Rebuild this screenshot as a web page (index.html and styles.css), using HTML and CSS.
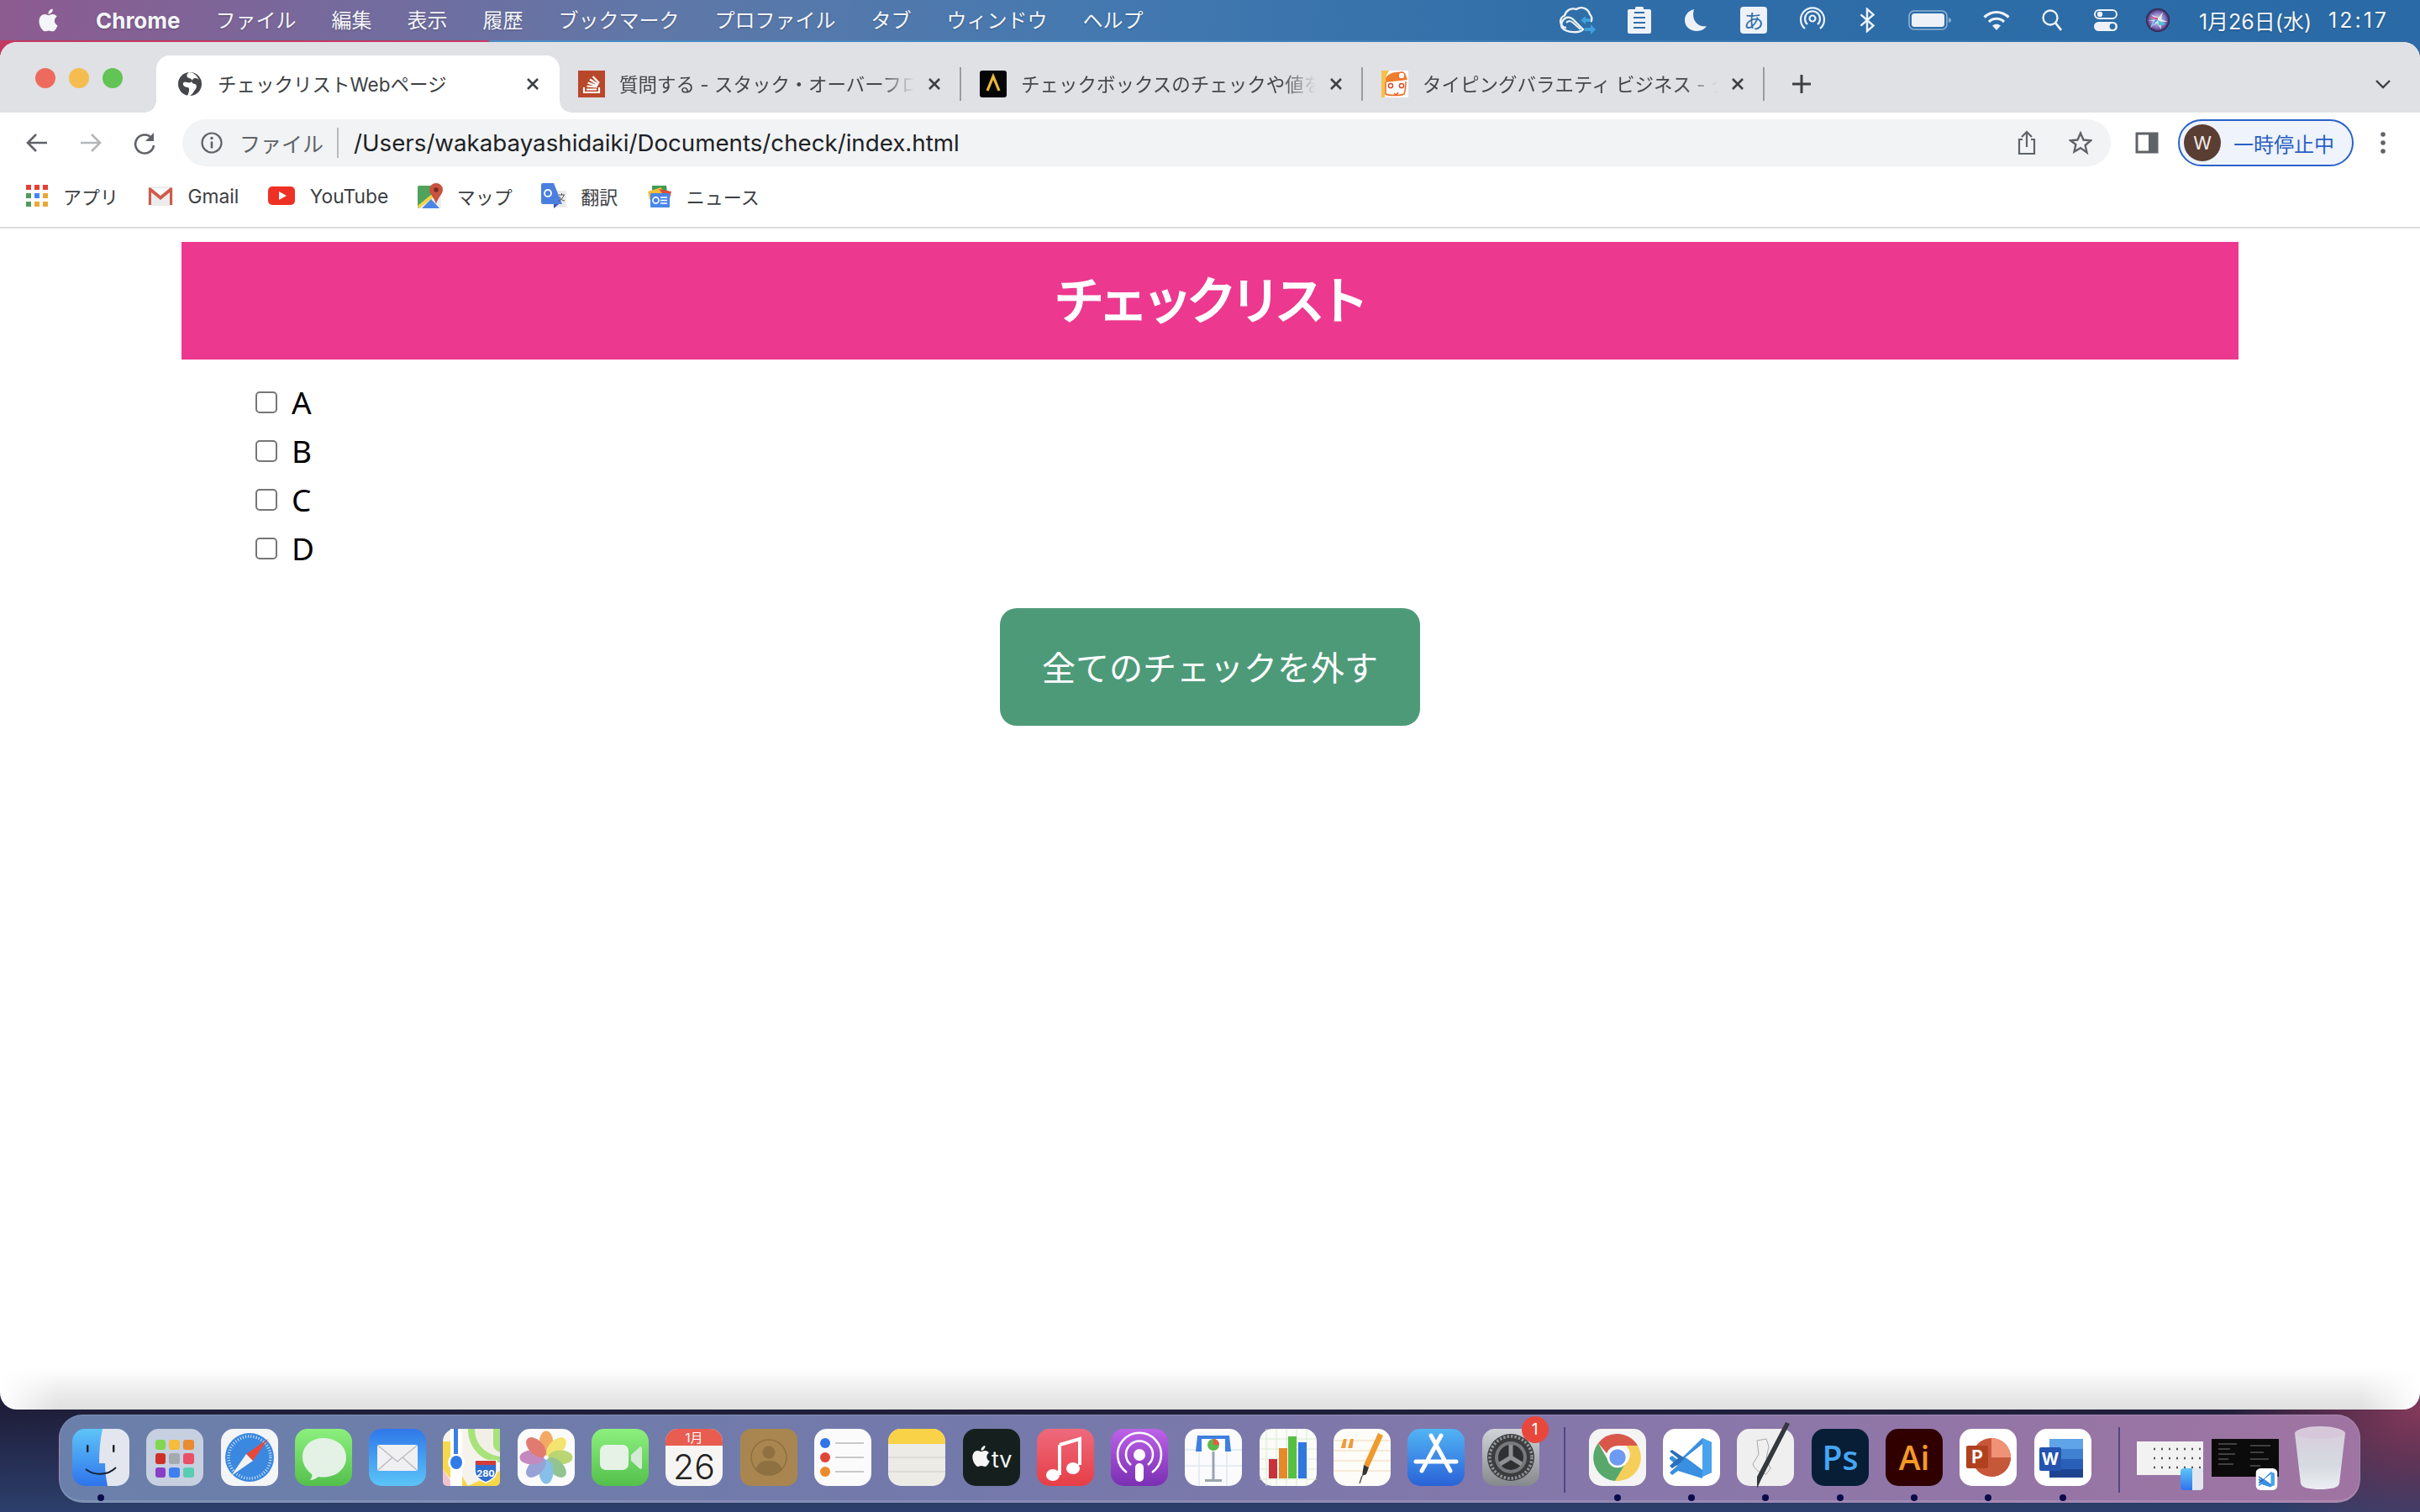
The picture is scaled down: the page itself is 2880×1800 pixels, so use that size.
FILE: index.html
```html
<!DOCTYPE html>
<html lang="ja">
<head>
<meta charset="utf-8">
<title>チェックリストWebページ</title>
<link rel="stylesheet" href="styles.css">
</head>
<body>
<svg class="defs" width="0" height="0">
  <symbol id="x" viewBox="0 0 24 24"><path d="M6 6l12 12M18 6L6 18" stroke="#3c4043" stroke-width="2.6" fill="none"/></symbol>
  <symbol id="apple" viewBox="0 0 24 24"><path d="M12.152 6.896c-.948 0-2.415-1.078-3.96-1.04-2.04.027-3.91 1.183-4.961 3.014-2.117 3.675-.546 9.103 1.519 12.09 1.013 1.454 2.208 3.09 3.792 3.039 1.52-.065 2.09-.987 3.935-.987 1.831 0 2.35.987 3.96.948 1.637-.026 2.676-1.48 3.676-2.948 1.156-1.688 1.636-3.325 1.662-3.415-.039-.013-3.182-1.221-3.22-4.857-.026-3.04 2.48-4.494 2.597-4.559-1.429-2.09-3.623-2.324-4.39-2.376-2-.156-3.675 1.09-4.61 1.09zM15.53 3.83c.843-1.012 1.4-2.427 1.245-3.83-1.207.052-2.662.805-3.532 1.818-.78.896-1.454 2.338-1.273 3.714 1.338.104 2.715-.688 3.559-1.701"/></symbol>
  <symbol id="finder" viewBox="0 0 68 68">
    <rect width="68" height="68" rx="15" fill="url(#gFinderL)"/>
    <path d="M36 0h17a15 15 0 0 1 15 15v38a15 15 0 0 1-15 15H42c-2-10-3-18-3-27h-7c0-14 1-28 4-41z" fill="#e3e6ee"/>
    <path d="M16 48c10 8 26 8 36-2" stroke="#15202e" stroke-width="1.8" fill="none"/>
    <rect x="17" y="19" width="2.4" height="9" rx="1.2" fill="#15202e"/><rect x="48" y="19" width="2.4" height="9" rx="1.2" fill="#15202e"/>
  </symbol>
  <symbol id="vscode" viewBox="0 0 68 68">
    <rect width="68" height="68" rx="15" fill="#fff"/>
    <path d="M47 11l11 5v36l-11 5-20-20 20-15v-11z" fill="#2f7fd0"/>
    <path d="M47 11L19 38l-8-6-3 2 0 2 9 8-9 8 3 3 7-5 29 9V51L27 34l20-16z" fill="#3b8fe0"/>
    <path d="M47 11l11 5v36l-11 5z" fill="#48a3ec"/>
    <path d="M47 19L27 34 47 49z" fill="#fff"/>
    <path d="M11 25l-3 2 10 8-10 9 3 3 10-7 5-5z" fill="#2a6fbb"/>
  </symbol>
  <linearGradient id="gFinderL" x1="0" y1="0" x2="0" y2="1"><stop offset="0" stop-color="#5ec4f8"/><stop offset="1" stop-color="#2f74ec"/></linearGradient>
  <linearGradient id="gGreen" x1="0" y1="0" x2="0" y2="1"><stop offset="0" stop-color="#8cf07e"/><stop offset="1" stop-color="#54c04c"/></linearGradient>
  <linearGradient id="gMail" x1="0" y1="0" x2="0" y2="1"><stop offset="0" stop-color="#2f78ea"/><stop offset="1" stop-color="#5cc4f8"/></linearGradient>
  <linearGradient id="gMusic" x1="0" y1="0" x2="0" y2="1"><stop offset="0" stop-color="#ee6a7c"/><stop offset="1" stop-color="#e63e46"/></linearGradient>
  <linearGradient id="gPod" x1="0" y1="0" x2="0" y2="1"><stop offset="0" stop-color="#bc62e8"/><stop offset="1" stop-color="#7a2fb2"/></linearGradient>
  <linearGradient id="gStore" x1="0" y1="0" x2="0" y2="1"><stop offset="0" stop-color="#52b4f4"/><stop offset="1" stop-color="#2a62d8"/></linearGradient>
  <linearGradient id="gSet" x1="0" y1="0" x2="0" y2="1"><stop offset="0" stop-color="#d0d4d8"/><stop offset="1" stop-color="#85888c"/></linearGradient>
  <linearGradient id="gTrash" x1="0" y1="0" x2="0" y2="1"><stop offset="0" stop-color="#d8ccdc"/><stop offset=".6" stop-color="#d5dae0"/><stop offset="1" stop-color="#eceef2"/></linearGradient>
  <radialGradient id="gSiri"><stop offset="0" stop-color="#dff0f2"/><stop offset=".7" stop-color="#7a68b8"/><stop offset="1" stop-color="#2a1c42"/></radialGradient>
</svg>

<header class="menubar">
  <svg class="apple-logo" viewBox="0 0 24 24"><use href="#apple"/></svg>
  <nav class="menu">
    <span class="menu-app">Chrome</span><span>ファイル</span><span>編集</span><span>表示</span><span>履歴</span><span>ブックマーク</span><span>プロファイル</span><span>タブ</span><span>ウィンドウ</span><span>ヘルプ</span>
  </nav>
  <div class="status">
    <svg class="st-cloud" viewBox="0 0 44 36"><path d="M9 27a7.500 7.500 0 0 1-2-14.500C9 6 15 3 21 5c6-4 14-1 16 6 3 3 3 7 1 9" fill="none" stroke="#eef2f8" stroke-width="2.400"/><path d="M4 20c3-6 9-7 13-3l12 12c-4 5-20 4-25-2-1-2-1-5 0-7z" fill="none" stroke="#eef2f8" stroke-width="2.400"/><path d="M9 21c3-3 6-2 8 0l9 8" fill="none" stroke="#eef2f8" stroke-width="2"/><path d="M26 18l6-5v3h6v4h-6v3z" fill="#3fa0de"/><path d="M44 29l-6 6v-4h-7v-4h7v-4z" fill="#3fa0de"/></svg>
    <svg class="st-clip" viewBox="0 0 28 32"><path d="M2 3h7V1.500C9 .5 10 0 11 0h6c1 0 2 .5 2 1.500V3h7a2 2 0 0 1 2 2v25a2 2 0 0 1-2 2H2a2 2 0 0 1-2-2V5a2 2 0 0 1 2-2z" fill="#eef2f8"/><path d="M8 7h12M7 13h14M7 19h14M7 25h14" stroke="#2f6ea8" stroke-width="2"/></svg>
    <svg class="st-moon" viewBox="0 0 30 28"><path d="M13 1C5 3 2 9 2 14c0 8 7 13 14 13 6 0 10-3 12-6-9 2-19-6-15-20z" fill="#eef2f8"/></svg>
    <span class="st-ime">あ</span>
    <svg class="st-air" viewBox="0 0 32 32"><g fill="none" stroke="#eef2f8" stroke-width="2.200"><circle cx="16" cy="14" r="3.500"/><path d="M10 21a9 9 0 1 1 12 0M7 26a14 14 0 1 1 18 0"/></g></svg>
    <svg class="st-bt" viewBox="0 0 22 32"><path d="M3 9l16 14-8 7V2l8 7L3 23" fill="none" stroke="#eef2f8" stroke-width="2.600"/></svg>
    <svg class="st-bat" viewBox="0 0 51 24"><rect x="1" y="1" width="45" height="22" rx="6" fill="none" stroke="#8fb2d4" stroke-width="1.600"/><rect x="4" y="4" width="39" height="16" rx="3.500" fill="#eef2f8"/><path d="M48 9c2 .5 3 1.500 3 3s-1 2.500-3 3z" fill="#8fb2d4"/></svg>
    <svg class="st-wifi" viewBox="0 0 32 26"><g fill="none" stroke="#eef2f8" stroke-width="3.200"><path d="M1.500 9.500C10 1.500 22 1.500 30.500 9.500"/><path d="M7 15c5-5 13-5 18 0"/></g><path d="M11 19.500c3-2.500 7-2.500 10 0L16 25z" fill="#eef2f8"/></svg>
    <svg class="st-search" viewBox="0 0 24 26"><circle cx="10" cy="10" r="8.500" fill="none" stroke="#eef2f8" stroke-width="2.400"/><path d="M16 16l7 9" stroke="#eef2f8" stroke-width="2.800"/></svg>
    <svg class="st-ctrl" viewBox="0 0 28 26"><rect x="1" y="1" width="26" height="10" rx="5" fill="none" stroke="#eef2f8" stroke-width="2"/><circle cx="7" cy="6" r="3.200" fill="#eef2f8"/><rect y="15" width="28" height="11" rx="5.500" fill="#eef2f8"/><circle cx="22" cy="20.500" r="3.400" fill="#2d6ca8"/></svg>
    <svg class="st-siri" viewBox="0 0 28 28"><circle cx="14" cy="14" r="14" fill="url(#gSiri)"/><path d="M14 14L5 7l10 4 5-7-2 9 8 3-9 0 1 9-5-8-8 6 4-8-8-1z" fill="#e8f6ee" opacity=".85"/><path d="M14 14L3 10l11 1z" fill="#e0508c"/><path d="M14 14l10 5-9 1z" fill="#46c6d8"/><path d="M14 14l-8 8 5-9z" fill="#5a8ee8"/></svg>
    <time class="st-date">1月26日(水)</time>
    <time class="st-time">12:17</time>
  </div>
</header>

<main class="window">
  <div class="tabstrip">
    <div class="lights"><i class="red"></i><i class="yellow"></i><i class="green"></i></div>
    <div class="tab active">
      <svg class="fav" viewBox="0 0 32 32"><circle cx="16" cy="16" r="14" fill="#45474a"/><path d="M15 2c-4 3-3 6 0 7 3 .5 5 3 2 5-3 1.500-8-2-9 1s3 5 6 5c2 2 1 6-1 10 5 1 7-4 9-7 2-2 3-6 0-7-3 0-5-3-3-5 2-3 6-2 8 0-3-6-8-9-12-9z" fill="#fff"/></svg>
      <span class="tab-title">チェックリストWebページ</span>
      <svg class="close" viewBox="0 0 24 24"><use href="#x"/></svg>
    </div>
    <div class="tab sep">
      <svg class="fav" viewBox="0 0 32 32"><rect width="32" height="32" fill="#b9472a"/><path d="M7 20v6h18v-6" fill="none" stroke="#fff" stroke-width="2.200"/><path d="M10 22.500h12M10.500 18.500l12 1M11.500 14.500l11.500 4M14 10.500l10 6.500M17.500 7l7.500 8" stroke="#fff" stroke-width="2.200"/></svg>
      <span class="tab-title fade">質問する - スタック・オーバーフロー</span>
      <svg class="close" viewBox="0 0 24 24"><use href="#x"/></svg>
    </div>
    <div class="tab sep">
      <svg class="fav" viewBox="0 0 32 32"><rect width="32" height="32" rx="3" fill="#050505"/><path d="M9 24L16 7l7 17" fill="none" stroke="#eab93a" stroke-width="3.200"/></svg>
      <span class="tab-title fade">チェックボックスのチェックや値を取得</span>
      <svg class="close" viewBox="0 0 24 24"><use href="#x"/></svg>
    </div>
    <div class="tab sep">
      <svg class="fav" viewBox="0 0 32 32"><rect width="32" height="32" fill="#fff"/><path d="M0 0h9L5 8 4 32H0z" fill="#f6c148"/><path d="M5 9C8 3 18 0 28 3l3 8-26 3z" fill="#ef7d2e"/><circle cx="24" cy="6" r="4" fill="#fff" stroke="#ef6a20" stroke-width="1.500"/><path d="M5 14v14c4 2 18 2 22 0 2-6 2-10 2-15" fill="none" stroke="#ef6a20" stroke-width="1.500"/><circle cx="11" cy="18" r="2.600" fill="none" stroke="#c8502a" stroke-width="1.500"/><circle cx="24" cy="18" r="2.600" fill="none" stroke="#c8502a" stroke-width="1.500"/><path d="M15 27c2 2 4 2 5-1" fill="none" stroke="#e0501a" stroke-width="1.500"/></svg>
      <span class="tab-title fade">タイピングバラエティ ビジネス - タイピング</span>
      <svg class="close" viewBox="0 0 24 24"><use href="#x"/></svg>
    </div>
    <svg class="new-tab" viewBox="0 0 24 24"><path d="M12 1v22M1 12h22" stroke="#3c4043" stroke-width="3"/></svg>
    <svg class="tab-list" viewBox="0 0 20 12"><path d="M2 2l8 8 8-8" fill="none" stroke="#3c4043" stroke-width="2.400"/></svg>
  </div>

  <div class="toolbar">
    <svg class="nav" viewBox="0 0 28 28"><path d="M26 14H4M13 4L3 14l10 10" fill="none" stroke="#5f6368" stroke-width="2.600"/></svg>
    <svg class="nav" viewBox="0 0 28 28"><path d="M2 14h22M15 4l10 10-10 10" fill="none" stroke="#b4b7ba" stroke-width="2.600"/></svg>
    <svg class="nav" viewBox="0 0 28 28"><path d="M23 9a11 11 0 1 0 2 8" fill="none" stroke="#5f6368" stroke-width="2.600"/><path d="M25 2v10H15z" fill="#5f6368"/></svg>
    <div class="omnibox">
      <svg class="info" viewBox="0 0 26 26"><circle cx="13" cy="13" r="11.500" fill="none" stroke="#5f6368" stroke-width="2.200"/><path d="M13 11.500v8" stroke="#5f6368" stroke-width="2.600"/><circle cx="13" cy="7.500" r="1.700" fill="#5f6368"/></svg>
      <span class="scheme">ファイル</span>
      <i class="omni-sep"></i>
      <span class="url">/Users/wakabayashidaiki/Documents/check/index.html</span>
      <svg class="share" viewBox="0 0 24 30"><path d="M7 11H3v17h18V11h-4M12 20V2M6 8l6-6 6 6" fill="none" stroke="#5f6368" stroke-width="2.200"/></svg>
      <svg class="star" viewBox="0 0 28 28"><path d="M14 2.500l3.500 8 8.500.8-6.400 5.700 1.900 8.500L14 20.100l-7.500 4.400 1.900-8.500L2 11.300l8.500-.8z" fill="none" stroke="#5f6368" stroke-width="2.400"/></svg>
    </div>
    <svg class="panel" viewBox="0 0 28 28"><rect x="2" y="3" width="24" height="22" fill="none" stroke="#5f6368" stroke-width="3"/><rect x="16" y="3" width="10" height="22" fill="#5f6368"/></svg>
    <div class="profile"><span class="avatar">W</span><span>一時停止中</span></div>
    <svg class="more" viewBox="0 0 8 28"><circle cx="4" cy="4" r="2.800" fill="#5f6368"/><circle cx="4" cy="14" r="2.800" fill="#5f6368"/><circle cx="4" cy="24" r="2.800" fill="#5f6368"/></svg>
  </div>

  <div class="bookmarks">
    <a class="bm"><svg class="bm-grid" viewBox="0 0 26 26"><rect width="6" height="6" fill="#e34133"/><rect x="10" width="6" height="6" fill="#e34133"/><rect x="20" width="6" height="6" fill="#e34133"/><rect y="10" width="6" height="6" fill="#4f9b5a"/><rect x="10" y="10" width="6" height="6" fill="#4285f4"/><rect x="20" y="10" width="6" height="6" fill="#e8a838"/><rect y="20" width="6" height="6" fill="#4f9b5a"/><rect x="10" y="20" width="6" height="6" fill="#e8a838"/><rect x="20" y="20" width="6" height="6" fill="#e8a838"/></svg><span>アプリ</span></a>
    <a class="bm"><svg class="bm-ico" viewBox="0 0 30 24"><rect y="1" width="30" height="23" rx="1.500" fill="#ececec"/><path d="M3 3l12 10L27 3" fill="#fafafa"/><path d="M1 3v20h3V8l11 9 11-9v15h3V3c-1-1-2-1-3 0L15 12 4 3C3 2 2 2 1 3z" fill="#cf5a4c"/></svg><span class="bm-latin">Gmail</span></a>
    <a class="bm"><svg class="bm-ico bm-yt" viewBox="0 0 32 22"><rect width="32" height="22" rx="5" fill="#ee3124"/><path d="M13 6l9 5-9 5z" fill="#fff"/></svg><span class="bm-latin">YouTube</span></a>
    <a class="bm"><svg class="bm-ico" viewBox="0 0 30 30"><rect y="3" width="28" height="27" rx="2" fill="#50a35c"/><path d="M0 28L28 10v20H3z" fill="#f0f0f0"/><path d="M0 27L17 13l3 3L2 30z" fill="#f3d44b"/><path d="M5 30l11-11 10 11z" fill="#4a86e8"/><path d="M22 0a8 8 0 0 1 8 8c0 5-6 9-8 17-2-8-8-12-8-17a8 8 0 0 1 8-8z" fill="#c9523f"/><circle cx="22" cy="8" r="2.800" fill="#7a2a20"/></svg><span>マップ</span></a>
    <a class="bm"><svg class="bm-ico" viewBox="0 0 30 30"><rect x="14" y="9" width="16" height="20" rx="1" fill="#ececec"/><path d="M2 0h13l10 25H2a2 2 0 0 1-2-2V2a2 2 0 0 1 2-2z" fill="#4a7fe0"/><path d="M15 25l6 0-6 5z" fill="#3f57b0"/><path d="M21 14h7M24.500 12v2M27 14c-1 4-3 6-6 7M22 16c1 3 3 5 6 5" stroke="#555" stroke-width="1" fill="none"/><circle cx="8" cy="12" r="4" fill="none" stroke="#fff" stroke-width="1.800"/></svg><span>翻訳</span></a>
    <a class="bm"><svg class="bm-ico" viewBox="0 0 30 30"><path d="M6 3h17l1 8H6z" fill="#3f9b55"/><path d="M1 10L17 5l2 8L3 20z" fill="#f4c03a"/><path d="M14 7l15 3-3 12z" fill="#dd4b3e"/><rect x="4" y="12" width="23" height="17" rx="1" fill="#4a86e8"/><path d="M16 17h8M16 20.500h8M16 24h8" stroke="#fff" stroke-width="1.500"/><circle cx="10.500" cy="20.500" r="3.600" fill="none" stroke="#fff" stroke-width="1.600"/></svg><span>ニュース</span></a>
  </div>

  <section class="page">
    <h1 class="page-title">チェックリスト</h1>
    <form class="checklist">
      <label class="check-row"><input type="checkbox"><span>A</span></label>
      <label class="check-row"><input type="checkbox"><span>B</span></label>
      <label class="check-row"><input type="checkbox"><span>C</span></label>
      <label class="check-row"><input type="checkbox"><span>D</span></label>
    </form>
    <button class="clear-btn" type="button">全てのチェックを外す</button>
  </section>
</main>

<footer class="dock">
  <div class="item run"><svg class="ico" viewBox="0 0 68 68"><use href="#finder"/></svg></div>
  <div class="item"><svg class="ico" viewBox="0 0 68 68"><rect width="68" height="68" rx="15" fill="#c6d0e0"/><rect x="11" y="13" width="12" height="12" rx="3" fill="#7fd84f"/><rect x="27" y="13" width="13" height="12" rx="3" fill="#f6bc3c"/><rect x="44" y="13" width="13" height="12" rx="3" fill="#e98b2e"/><rect x="11" y="29" width="12" height="13" rx="3" fill="#cf3128"/><rect x="27" y="29" width="13" height="13" rx="3" fill="#a5aab0"/><rect x="44" y="29" width="13" height="13" rx="3" fill="#e94f66"/><rect x="11" y="46" width="12" height="12" rx="3" fill="#8a3fc6"/><rect x="27" y="46" width="13" height="12" rx="3" fill="#3f7ff0"/><rect x="44" y="46" width="13" height="12" rx="3" fill="#58cdb0"/></svg></div>
  <div class="item"><svg class="ico" viewBox="0 0 68 68"><rect width="68" height="68" rx="15" fill="#f4f5f7"/><circle cx="34" cy="34" r="29" fill="#3a88e0"/><circle cx="34" cy="34" r="25" fill="none" stroke="#d4e6f8" stroke-width="3.500" stroke-dasharray="1 2.200"/><path d="M56 12L30 30l8 8z" fill="#e8483a"/><path d="M12 56l18-26 8 8z" fill="#f2f2f2"/></svg></div>
  <div class="item"><svg class="ico" viewBox="0 0 68 68"><rect width="68" height="68" rx="15" fill="url(#gGreen)"/><path d="M34 12c-13 0-25 8-25 23 0 9 6 16 11 20 1 2 0 4-2 7 4 0 7-2 10-4 2 .5 4 .5 6 .5 14 0 27-9 27-23.500S48 12 34 12z" transform="translate(0 -1)" fill="#e4f2e6"/></svg></div>
  <div class="item"><svg class="ico" viewBox="0 0 68 68"><rect width="68" height="68" rx="15" fill="url(#gMail)"/><rect x="10" y="19" width="48" height="31" rx="2" fill="#f0f0f2"/><path d="M11 20l23 19 23-19M11 49l17-15M57 49L40 34" fill="none" stroke="#b8b8bc" stroke-width="1.200"/></svg></div>
  <div class="item"><svg class="ico" viewBox="0 0 68 68"><rect width="68" height="68" rx="15" fill="#f5f3ec"/><path d="M30 0h38v40C50 40 30 26 30 0z" fill="#a8e27a"/><path d="M38 0h22v18c0 5 3 8 8 10v5C50 30 38 18 38 0z" fill="#f2efe6"/><path d="M0 15h9v25l12 13 9 15H16L0 48z" fill="#f6d84c"/><path d="M0 48l13 20H5a5 5 0 0 1-5-5z" fill="#f3c3d0"/><rect x="9" y="0" width="14" height="68" fill="#fff"/><rect x="13" y="0" width="5" height="30" fill="#3a7fe8"/><circle cx="16" cy="40" r="10" fill="#fff"/><ellipse cx="16" cy="40" rx="7" ry="8" fill="#2f7ce8"/><path d="M30 68L68 50v13a5 5 0 0 1-5 5z" fill="#f6d84c"/><path d="M38 50V38h26v12c0 8-8 12-13 14-5-2-13-6-13-14z" fill="#2f6ed0" stroke="#fff" stroke-width="1.500"/><path d="M39 38h24v5H39z" fill="#d33a3a"/><text class="ic-t" x="51" y="57" text-anchor="middle" font-size="11" font-weight="700" fill="#fff">280</text></svg></div>
  <div class="item"><svg class="ico" viewBox="0 0 68 68"><rect width="68" height="68" rx="15" fill="#fbfbfb"/><g opacity=".72" transform="translate(34 34)"><ellipse cy="-17" rx="8.500" ry="14.500" fill="#f08a2a"/><ellipse cy="-17" rx="8.500" ry="14.500" fill="#f0dc3c" transform="rotate(45)"/><ellipse cy="-17" rx="8.500" ry="14.500" fill="#a0c840" transform="rotate(90)"/><ellipse cy="-17" rx="8.500" ry="14.500" fill="#6ab06a" transform="rotate(135)"/><ellipse cy="-17" rx="8.500" ry="14.500" fill="#5aa8e0" transform="rotate(180)"/><ellipse cy="-17" rx="8.500" ry="14.500" fill="#7280c8" transform="rotate(225)"/><ellipse cy="-17" rx="8.500" ry="14.500" fill="#b060a8" transform="rotate(270)"/><ellipse cy="-17" rx="8.500" ry="14.500" fill="#d84a3c" transform="rotate(315)"/></g></svg></div>
  <div class="item"><svg class="ico" viewBox="0 0 68 68"><rect width="68" height="68" rx="15" fill="url(#gGreen)"/><rect x="10" y="19" width="34" height="30" rx="7" fill="#e6f2e6"/><path d="M47 31l11-10c1 0 2 1 2 2v23c0 1-1 2-2 2L47 38z" fill="#d4ead6"/></svg></div>
  <div class="item"><svg class="ico" viewBox="0 0 68 68"><rect width="68" height="68" rx="15" fill="#f6f5f3"/><path d="M0 20V15A15 15 0 0 1 15 0h38a15 15 0 0 1 15 15v5z" fill="#e95c50"/><text class="ic-t" x="34" y="16" text-anchor="middle" font-size="15" fill="#fff">1月</text><text class="ic-t" x="34" y="60" text-anchor="middle" font-size="41" font-weight="300" fill="#222">26</text></svg></div>
  <div class="item"><svg class="ico" viewBox="0 0 68 68"><rect width="68" height="68" rx="13" fill="#a98650"/><circle cx="34" cy="34" r="21" fill="none" stroke="#8f7040" stroke-width="1.500"/><circle cx="34" cy="28" r="7.500" fill="#8f7040"/><path d="M18 49c3-10 10-11 16-11s13 1 16 11c-8 7-24 7-32 0z" fill="#8f7040"/></svg></div>
  <div class="item"><svg class="ico" viewBox="0 0 68 68"><rect width="68" height="68" rx="15" fill="#fbfbfb"/><circle cx="13" cy="17" r="6" fill="#2f74ea"/><circle cx="13" cy="34" r="6" fill="#e04638"/><circle cx="13" cy="51" r="6" fill="#ec8b2c"/><path d="M25 17h34M25 34h34M25 51h34" stroke="#c8c8c8" stroke-width="2"/></svg></div>
  <div class="item"><svg class="ico" viewBox="0 0 68 68"><rect width="68" height="68" rx="15" fill="#ecebe6"/><path d="M0 18V15A15 15 0 0 1 15 0h38a15 15 0 0 1 15 15v3z" fill="#f9d248"/><path d="M0 34h68M0 51h68" stroke="#dcdbd6" stroke-width="2"/></svg></div>
  <div class="item"><svg class="ico" viewBox="0 0 68 68"><rect width="68" height="68" rx="15" fill="#15201e"/><svg x="9" y="19" width="25" height="27" viewBox="0 0 24 24"><use href="#apple" fill="#f6f6f6"/></svg><text class="ic-t" x="34" y="46" font-size="27" fill="#f6f6f6">tv</text></svg></div>
  <div class="item"><svg class="ico" viewBox="0 0 68 68"><rect width="68" height="68" rx="15" fill="url(#gMusic)"/><path d="M27 19l24-7v31" fill="none" stroke="#fff" stroke-width="4"/><path d="M27 19v36" stroke="#fff" stroke-width="4"/><ellipse cx="19" cy="55" rx="8" ry="7" fill="#fff"/><ellipse cx="43" cy="47" rx="8" ry="7" fill="#fff"/></svg></div>
  <div class="item"><svg class="ico" viewBox="0 0 68 68"><rect width="68" height="68" rx="15" fill="url(#gPod)"/><g fill="none" stroke="#fff" stroke-width="2.600"><path d="M19 52a26 26 0 1 1 30 0"/><path d="M24 43a16 16 0 1 1 20 0"/></g><circle cx="34" cy="31" r="7" fill="#fff"/><rect x="29" y="41" width="10" height="22" rx="5" fill="#fff"/></svg></div>
  <div class="item"><svg class="ico" viewBox="0 0 68 68"><rect width="68" height="68" rx="15" fill="#fbfbfd"/><path d="M0 25h68M0 44h68M17 25v43M50 25v43" stroke="#dfe8f2" stroke-width="1.500"/><path d="M15 8h38l2 19H13z" fill="#3f7fe0"/><rect x="20" y="12" width="28" height="15" fill="#fff"/><circle cx="34" cy="19" r="7" fill="#5cb84e"/><path d="M34 19v-7a7 7 0 0 1 7 7z" fill="#e85a3a"/><rect x="32.500" y="27" width="3" height="34" fill="#9aa4ae"/><rect x="24" y="60" width="20" height="3" fill="#9aa4ae"/></svg></div>
  <div class="item"><svg class="ico" viewBox="0 0 68 68"><rect width="68" height="68" rx="15" fill="#fbfbf8"/><path d="M8 0v68M20 0v68M32 0v68M44 0v68M56 0v68M0 12h68M0 24h68M0 36h68M0 48h68M0 60h68" stroke="#d8ecd4" stroke-width="1"/><rect x="11" y="36" width="10" height="23" fill="#c9323a"/><rect x="23" y="23" width="10" height="36" fill="#e58a2a"/><rect x="34" y="9" width="10" height="50" fill="#55c044"/><rect x="46" y="16" width="10" height="43" fill="#2f78e0"/></svg></div>
  <div class="item"><svg class="ico" viewBox="0 0 68 68"><rect width="68" height="68" rx="15" fill="#fdfcf8"/><path d="M0 14h68M0 26h68M0 38h68M0 50h68" stroke="#f5e4cc" stroke-width="1.500"/><text class="ic-t" x="6" y="38" font-size="36" font-weight="700" fill="#ee9a38">“</text><path d="M53 5l6 3-17 38-6-3z" fill="#ee9a2e"/><path d="M36 43l6 3-3 8-5 2z" fill="#333"/><path d="M34 56l-3 9" stroke="#555" stroke-width="1.500"/></svg></div>
  <div class="item"><svg class="ico" viewBox="0 0 68 68"><rect width="68" height="68" rx="15" fill="url(#gStore)"/><path d="M28 8l23 42M40 8L17 50M10 39h48" stroke="#fff" stroke-width="5" stroke-linecap="round"/></svg></div>
  <div class="item settings"><svg class="ico" viewBox="0 0 68 68"><rect width="68" height="68" rx="15" fill="url(#gSet)"/><circle cx="34" cy="34" r="28" fill="#3a3c3e"/><circle cx="34" cy="34" r="25" fill="none" stroke="#909498" stroke-width="3.500" stroke-dasharray="2.500 2"/><circle cx="34" cy="34" r="19" fill="#77797c"/><circle cx="34" cy="34" r="15" fill="#2f3032"/><path d="M34 34V19M34 34l13 8M34 34l-13 8" stroke="#8f9194" stroke-width="5"/></svg><span class="badge">1</span></div>
  <i class="dock-sep first"></i>
  <div class="item run"><svg class="ico" viewBox="0 0 68 68"><rect width="68" height="68" rx="15" fill="#f4f4f4"/><path d="M34 6a28 28 0 0 1 24 14H34a14 14 0 0 0-13 9L11 17A28 28 0 0 1 34 6z" fill="#d8574a"/><path d="M58 20a28 28 0 0 1-27 42l12-20a14 14 0 0 0 1-22z" fill="#f6cf5a"/><path d="M31 62A28 28 0 0 1 11 17l12 21a14 14 0 0 0 20 4L31 62z" fill="#58a86c"/><circle cx="34" cy="34" r="11" fill="#6d9bf1" stroke="#fff" stroke-width="2.500"/></svg></div>
  <div class="item run"><svg class="ico" viewBox="0 0 68 68"><use href="#vscode"/></svg></div>
  <div class="item run"><svg class="ico" viewBox="0 0 68 68"><rect width="68" height="68" rx="15" fill="#efefef"/><path d="M24 14l11-2 3 9-3 14 5 12-5 7c-6-1-13-4-16-12l7-12z" fill="none" stroke="#a8a8a8" stroke-width="1"/><path d="M58-8l5 2L29 60l-5 11 0-14z" fill="#33383c"/></svg></div>
  <div class="item run"><svg class="ico" viewBox="0 0 68 68"><rect width="68" height="68" rx="15" fill="#071e36"/><text class="ic-b" x="34" y="49" text-anchor="middle" font-size="39" font-weight="600" fill="#46a6f5">Ps</text></svg></div>
  <div class="item run"><svg class="ico" viewBox="0 0 68 68"><rect width="68" height="68" rx="15" fill="#300000"/><text class="ic-b" x="34" y="49" text-anchor="middle" font-size="39" font-weight="600" fill="#f29a26">Ai</text></svg></div>
  <div class="item run"><svg class="ico" viewBox="0 0 68 68"><rect width="68" height="68" rx="15" fill="#fff"/><circle cx="38" cy="34" r="23" fill="#c9563a"/><path d="M38 11a23 23 0 0 1 23 23H38z" fill="#ef9276"/><path d="M38 34h23a23 23 0 0 1-23 23z" fill="#c4593a"/><rect x="8" y="20" width="26" height="27" rx="2" fill="#b0411e"/><text class="ic-t" x="21" y="41" text-anchor="middle" font-size="21" font-weight="700" fill="#fff">P</text></svg></div>
  <div class="item run"><svg class="ico" viewBox="0 0 68 68"><rect width="68" height="68" rx="15" fill="#fff"/><rect x="18" y="12" width="40" height="12" fill="#5fa3e8"/><rect x="18" y="24" width="40" height="12" fill="#4080d0"/><rect x="18" y="36" width="40" height="12" fill="#2a5fb8"/><rect x="18" y="48" width="40" height="10" fill="#1d4490"/><rect x="6" y="22" width="26" height="28" rx="2" fill="#2454b0"/><text class="ic-t" x="19" y="43" text-anchor="middle" font-size="20" font-weight="700" fill="#fff">W</text></svg></div>
  <i class="dock-sep second"></i>
  <div class="item thumb thumb-a"><svg class="ico-thumb" viewBox="0 0 80 76"><rect y="15" width="79" height="40" fill="#f2f2f2"/><path d="M20 24h56M20 35h56M20 46h56" stroke="#555" stroke-width="2.600" stroke-dasharray="2 7"/><rect x="52" y="47" width="27" height="26" rx="4" fill="url(#gFinderL)"/><path d="M66 47h9a4 4 0 0 1 4 4v18a4 4 0 0 1-4 4h-9z" fill="#e3e6ee"/></svg></div>
  <div class="item thumb thumb-b"><svg class="ico-thumb" viewBox="0 0 80 76"><rect y="12" width="80" height="45" fill="#0b0b0b"/><path d="M8 18h22M8 24h14M8 30h20M8 36h12M8 42h18M46 20h24M46 28h16M46 36h22M46 44h12" stroke="#777" stroke-width="1"/><svg x="52" y="47" width="27" height="26" viewBox="0 0 68 68"><use href="#vscode"/></svg></svg></div>
  <div class="item trash"><svg class="ico-trash" viewBox="0 0 60 75"><path d="M0 8C2 3 16 0 30 0s28 3 30 8l-7 60c-1 5-10 7-23 7S8 73 7 68z" fill="url(#gTrash)"/><ellipse cx="30" cy="8" rx="29" ry="7" fill="#d6c8da"/></svg></div>
</footer>
</body>
</html>
```
FILE: styles.css
```css
:root {
  --ui: Inter, "Noto Sans CJK JP", sans-serif;
  --jp: "Noto Sans CJK JP", sans-serif;
}
* { box-sizing: border-box; }
html, body { margin: 0; padding: 0; }
body {
  width: 2880px;
  height: 1800px;
  overflow: hidden;
  font-family: var(--ui);
  background:
    linear-gradient(90deg, #c23a62 0, #c23a62 580px, #4c8cc4 584px, #2f6ba6 100%) 0 48px / 100% 30px no-repeat,
    radial-gradient(ellipse 240px 160px at 2880px 1680px, #83395a 0, rgba(131,57,90,0) 100%),
    linear-gradient(180deg, #1f1e3a 1678px, #2c3f6c 1800px) 0 0 / 100% 100%,
    linear-gradient(90deg, #1d3a60, #3a3f6a);
}
.defs { position: absolute; }

/* menu bar */
.menubar {
  height: 48px;
  display: flex;
  align-items: center;
  padding-left: 44px;
  background: linear-gradient(90deg, #8d5b90 0, #5f78a8 780px, #4479b0 1300px, #2f6ea8 1900px, #2a6aa6 100%);
  color: #f5f6fa;
  font-size: 24px;
  text-shadow: 0 1px 2px rgba(0,0,0,.25);
}
.apple-logo { width: 27px; height: 32px; fill: #f5f6fa; }
.menu { display: flex; align-items: center; gap: 42px; margin: 0 0 3px 43px; font-family: var(--jp); }
.menu-app { font-weight: 700; font-family: Inter, sans-serif; font-size: 26px; margin-top: 3px; }
.status { margin-left: auto; margin-right: 37px; display: flex; align-items: center; gap: 38px; }
.st-cloud { width: 44px; height: 36px; }
.st-clip { width: 28px; height: 32px; }
.st-moon { width: 30px; height: 28px; }
.st-ime {
  width: 32px; height: 32px; border-radius: 4px; background: #eef2f8; color: #2f6ea8;
  font: 24px/32px var(--jp); text-align: center; text-shadow: none;
}
.st-air { width: 32px; height: 32px; }
.st-bt { width: 22px; height: 30px; }
.st-bat { width: 51px; height: 24px; }
.st-wifi { width: 32px; height: 26px; }
.st-search { width: 24px; height: 26px; }
.st-ctrl { width: 28px; height: 26px; }
.st-siri { width: 28px; height: 28px; margin-left: -4px; }
.st-date { margin-left: -3px; font-size: 25px; }
.st-time { margin-left: -18px; font-size: 25px; letter-spacing: 3px; }

/* browser window */
.window {
  position: relative;
  height: 1628px;
  margin-top: 2px;
  background: #fff;
  border-radius: 20px;
  overflow: hidden;
  display: flex;
  flex-direction: column;
}
.window::after {
  content: "";
  position: absolute;
  left: 0; right: 0; bottom: 0;
  height: 50px;
  background: linear-gradient(180deg, rgba(0,0,0,0), rgba(0,0,0,.125));
  -webkit-mask-image: linear-gradient(90deg, transparent, #000 70px, #000 calc(100% - 70px), transparent);
  mask-image: linear-gradient(90deg, transparent, #000 70px, #000 calc(100% - 70px), transparent);
  pointer-events: none;
}
.tabstrip {
  height: 84px;
  flex: none;
  background: #dfe1e5;
  display: flex;
  align-items: flex-end;
}
.lights { display: flex; gap: 16px; padding-left: 42px; width: 186px; align-self: center; margin-top: 2px; }
.lights i { width: 24px; height: 24px; border-radius: 50%; }
.red { background: #ee6a5f; }
.yellow { background: #f5bd4f; }
.green { background: #61c454; }
.tab {
  position: relative;
  height: 68px;
  width: 478px;
  display: flex;
  align-items: center;
  padding: 0 20px 0 22px;
  color: #45474a;
  font-size: 22.500px;
}
.tab.active {
  width: 480px;
  background: #fff;
  border-radius: 16px 16px 0 0;
  padding-left: 24px;
  color: #3c4043;
}
.tab.active::before, .tab.active::after {
  content: "";
  position: absolute;
  bottom: 0;
  width: 14px;
  height: 14px;
}
.tab.active::before { left: -14px; background: radial-gradient(circle at 0 0, transparent 13.500px, #fff 14px); }
.tab.active::after { right: -14px; background: radial-gradient(circle at 100% 0, transparent 13.500px, #fff 14px); }
.tab.sep::after {
  content: "";
  position: absolute;
  right: 0;
  top: 14px;
  width: 2px;
  height: 40px;
  background: #9a9c9f;
}
.fav { width: 32px; height: 32px; flex: none; }
.tab-title { flex: 1; min-width: 0; margin: 0 12px 3px 17px; white-space: nowrap; overflow: hidden; }
.fade { -webkit-mask-image: linear-gradient(90deg, #000 calc(100% - 40px), transparent); mask-image: linear-gradient(90deg, #000 calc(100% - 40px), transparent); }
.close { width: 24px; height: 24px; flex: none; }
.new-tab { width: 24px; height: 24px; flex: none; margin: 0 0 22px 32px; }
.tab-list { width: 20px; height: 12px; flex: none; margin: 0 34px 28px auto; }

.toolbar {
  height: 72px;
  flex: none;
  display: flex;
  align-items: center;
  padding: 8px 0 8px 30px;
  gap: 36px;
}
.nav { width: 28px; height: 28px; flex: none; }
.omnibox {
  flex: none;
  width: 2295px;
  height: 56px;
  margin-left: -5px;
  border-radius: 28px;
  background: #f1f3f4;
  display: flex;
  align-items: center;
  padding: 0 22px;
}
.info { width: 26px; height: 26px; flex: none; }
.scheme { margin-left: 20px; font-size: 25px; color: #5f6368; }
.omni-sep { width: 2px; height: 36px; background: #b8babd; margin: 0 18px 0 16px; }
.url { flex: 1; font-size: 27.700px; color: #202124; }
.share { width: 24px; height: 30px; }
.star { width: 28px; height: 28px; margin-left: 38px; }
.panel { width: 28px; height: 28px; flex: none; margin-left: -7px; }
.profile {
  width: 209px;
  height: 56px;
  flex: none;
  margin-left: -13px;
  border: 2px solid #2b62c8;
  border-radius: 28px;
  background: #eef3fc;
  display: flex;
  align-items: center;
  gap: 15px;
  padding-left: 5px;
  color: #2a5fc4;
  font-size: 24px;
}
.avatar {
  width: 44px; height: 44px; border-radius: 50%;
  background: #5a3d33; color: #f2ece8;
  font-size: 22px; line-height: 44px; text-align: center;
}
.more { width: 8px; height: 28px; flex: none; margin-left: -5px; }

.bookmarks {
  height: 64px;
  flex: none;
  display: flex;
  align-items: center;
  gap: 34.500px;
  padding: 0 0 10px 31px;
  color: #3c4043;
  font-size: 22px;
}
.bm { display: flex; align-items: center; gap: 17px; }
.bm-grid { width: 26px; height: 26px; margin-right: 1px; }
.bm-ico { width: 30px; height: 30px; }
.bm-yt { width: 32px; }
.bm-latin { font-size: 22.800px; margin-left: 1px; }

.page {
  flex: 1;
  border-top: 2px solid #dcdcdc;
  padding-top: 16px;
  display: flex;
  flex-direction: column;
  font-family: var(--jp);
}
.page-title {
  width: 2448px;
  height: 140px;
  margin: 0 auto;
  padding-right: 4px;
  background: #ec388f;
  color: #fff;
  font-size: 60px;
  font-weight: 500;
  -webkit-text-stroke: 1.200px #fff;
  line-height: 131px;
  letter-spacing: -7.500px;
  text-align: center;
}
.checklist { width: 2448px; margin: 22px auto 0; padding-left: 88px; display: flex; flex-direction: column; }
.check-row { height: 58px; display: flex; align-items: center; gap: 17px; font-family: "Noto Sans", sans-serif; font-size: 37px; color: #000; }
.check-row span { margin-bottom: 1px; }
.check-row input {
  appearance: none;
  width: 26px;
  height: 26px;
  margin: 0;
  border: 2px solid #767676;
  border-radius: 5px;
  background: #fff;
}
.clear-btn {
  width: 500px;
  height: 140px;
  margin: 42px auto 0;
  padding: 0 0 3px;
  border: 0;
  border-radius: 20px;
  background: #4d9a79;
  color: #fff;
  font-family: var(--jp);
  font-size: 40px;
  font-weight: 400;
}

/* dock */
.dock {
  width: 2739px;
  height: 105px;
  margin: 6px 0 0 70px;
  padding: 16px 19px 0 15px;
  display: flex;
  gap: 20.300px;
  border-radius: 28px;
  border: 1px solid rgba(255,255,255,.14);
  border-bottom-width: 3px;
  background: linear-gradient(90deg, #6a80aa 0, #7479ab 40%, #8877aa 70%, #a074a2 100%);
}
.item { position: relative; width: 68px; flex: none; }
.item::after { content: ""; display: block; width: 8px; height: 8px; margin: 10px auto 0; border-radius: 50%; }
.run::after { background: #0b0a4a; }
.ico { display: block; width: 68px; height: 68px; overflow: visible; }
.ic-t { font-family: Inter, "Noto Sans CJK JP", sans-serif; }
.ic-b { font-family: "Open Sans", sans-serif; }
.badge {
  position: absolute;
  top: -15px;
  right: -11px;
  width: 32px;
  height: 32px;
  border-radius: 50%;
  background: #e8483c;
  color: #fff;
  font-size: 19px;
  line-height: 32px;
  text-align: center;
}
.dock-sep { width: 2px; height: 78px; flex: none; margin-top: -2px; background: #4f4784; }
.dock-sep.first { margin-left: 9px; margin-right: 7.500px; }
.dock-sep.second { margin-left: 12px; }
.thumb { width: 80px; }
.thumb-a { margin-right: -11px; }
.thumb-b { margin-right: -2px; }
.ico-thumb { display: block; width: 80px; height: 76px; overflow: visible; }
.trash { width: 60px; margin-top: -3px; }
.ico-trash { display: block; width: 60px; height: 75px; }
```
